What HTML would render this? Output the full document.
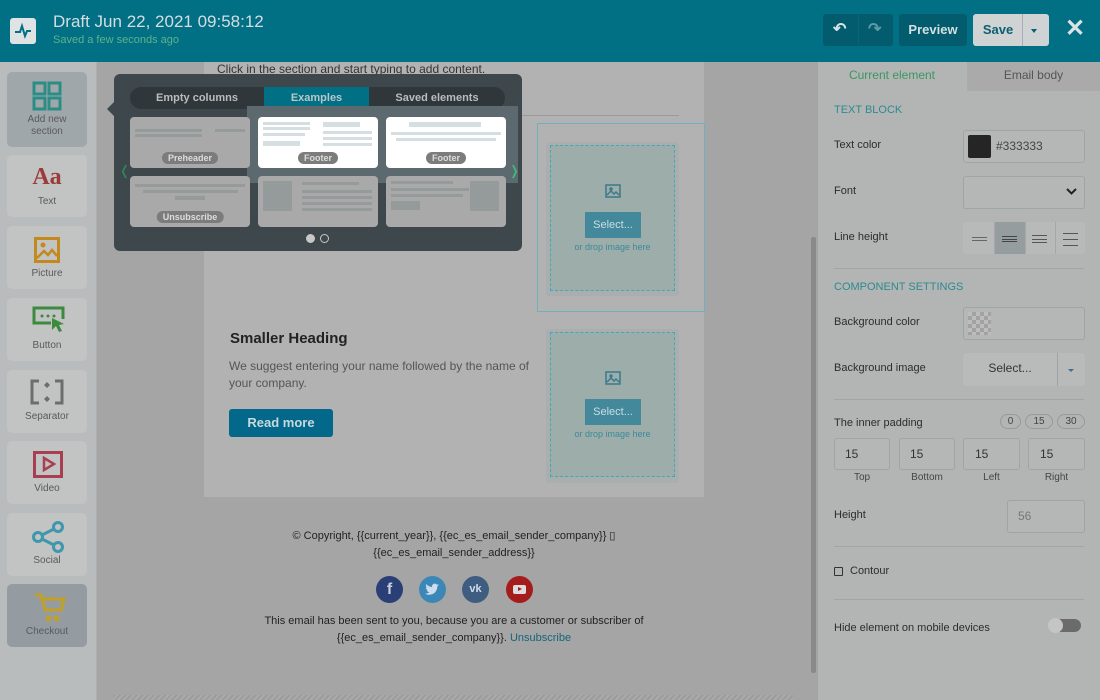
<!DOCTYPE html>
<html><head><meta charset="utf-8"><style>
*{box-sizing:border-box;margin:0;padding:0}
body{width:1100px;height:700px;overflow:hidden;position:relative;font-family:"Liberation Sans",sans-serif;background:#a5a5a5}
.abs{position:absolute}
#hdr{left:0;top:0;width:1100px;height:62px;background:#016f84}
.tile{position:absolute;left:7px;width:80px;background:#c2c3c3;border-radius:5px;text-align:center;font-size:10px;color:#5a5a5a}
.tile .lb{position:absolute;left:0;right:0;text-align:center;line-height:12px}
.rp{font-size:11px;color:#2c2c2c}
.inp{position:absolute;border:1px solid #9fa4a4;border-radius:3px;background:#b5b7b7}
.hr{position:absolute;left:834px;width:250px;height:1px;background:#9ea6a6}
.card{position:absolute;width:120px;height:51px;border-radius:4px;background:#a9a9a9}
.pill{position:absolute;bottom:4px;left:50%;transform:translateX(-50%);background:#7c7c7c;color:#ddd;font-size:9px;font-weight:bold;padding:1px 6px;border-radius:7px}
.ln{position:absolute;height:3px;background:#959a9b}
</style></head><body>
<div id="hdr" class="abs">
 <div class="abs" style="left:10px;top:18px;width:26px;height:26px;background:#dfe3e4;border-radius:3px">
  <svg width="26" height="26" viewBox="0 0 26 26"><path d="M5 14h5l2-6 3 10 2-5h4" fill="none" stroke="#016f84" stroke-width="2"/></svg></div>
 <div class="abs" style="left:53px;top:12px;color:#d6dde0;font-size:17px">Draft Jun 22, 2021 09:58:12</div>
 <div class="abs" style="left:53px;top:34px;color:#5fb38a;font-size:11px">Saved a few seconds ago</div>
 <div class="abs" style="left:823px;top:14px;width:70px;height:32px;background:#025c6e;border-radius:3px"></div>
 <div class="abs" style="left:858px;top:14px;width:1px;height:32px;background:#01687b"></div>
 <div class="abs" style="left:833px;top:19px;color:#d9e3e6;font-size:16px;font-weight:bold">↶</div>
 <div class="abs" style="left:868px;top:19px;color:#5d9aa7;font-size:16px;font-weight:bold">↷</div>
 <div class="abs" style="left:899px;top:14px;width:68px;height:32px;background:#025c6e;border-radius:3px;color:#d6dfe1;font-size:13px;font-weight:bold;text-align:center;line-height:32px">Preview</div>
 <div class="abs" style="left:973px;top:14px;width:76px;height:32px;background:#d0d3d4;border-radius:3px"></div>
 <div class="abs" style="left:973px;top:14px;width:50px;height:32px;color:#0b5f70;font-size:13px;font-weight:bold;text-align:center;line-height:32px">Save</div>
 <div class="abs" style="left:1022px;top:14px;width:1px;height:32px;background:#aab"></div>
 <div class="abs" style="left:1031px;top:29px;border:3px solid transparent;border-top:4px solid #0b5f70"></div>
 <div class="abs" style="left:1065px;top:14px;color:#dde3e5;font-size:24px;font-weight:bold">✕</div>
</div>

<div class="abs" style="left:0;top:62px;width:97px;height:638px;background:#b9bcbd;border-right:1px solid #adb0b1"></div>
<div class="tile" style="top:72px;height:75px;background:#a0a7ab">
 <svg class="abs" style="left:25px;top:9px" width="30" height="30" viewBox="0 0 30 30" fill="none" stroke="#2a8e84" stroke-width="3"><rect x="2" y="2" width="11" height="11"/><rect x="17" y="2" width="11" height="11"/><rect x="2" y="17" width="11" height="11"/><rect x="17" y="17" width="11" height="11"/></svg>
 <div class="lb" style="top:42px">Add new<br>section</div></div>
<div class="tile" style="top:155px;height:62px">
 <div class="abs" style="left:0;right:0;top:9px;font-family:'Liberation Serif',serif;font-weight:bold;font-size:24px;color:#9b3c3a">Aa</div>
 <div class="lb" style="top:41px">Text</div></div>
<div class="tile" style="top:226px;height:63px">
 <svg class="abs" style="left:27px;top:11px" width="26" height="26" viewBox="0 0 26 26"><rect x="1.5" y="1.5" width="23" height="23" fill="none" stroke="#c4891d" stroke-width="3"/><circle cx="9" cy="8" r="2.5" fill="#c4891d"/><path d="M3 21l7-7 4 4 4-5 5 6" fill="none" stroke="#c4891d" stroke-width="2.5"/></svg>
 <div class="lb" style="top:42px">Picture</div></div>
<div class="tile" style="top:298px;height:63px">
 <svg class="abs" style="left:24px;top:7px" width="36" height="32" viewBox="0 0 36 32"><path d="M20 18H3V3h29v11" fill="none" stroke="#3c8a3d" stroke-width="3"/><circle cx="11" cy="11" r="1.5" fill="#3c8a3d"/><circle cx="17" cy="11" r="1.5" fill="#3c8a3d"/><circle cx="23" cy="11" r="1.5" fill="#3c8a3d"/><path d="M21 13l12 6-5 1 3 6-3 1-3-6-4 4z" fill="#3c8a3d"/></svg>
 <div class="lb" style="top:42px">Button</div></div>
<div class="tile" style="top:370px;height:63px">
 <svg class="abs" style="left:23px;top:9px" width="34" height="26" viewBox="0 0 34 26" fill="none" stroke="#6d6d6d" stroke-width="3"><path d="M9 2H2v22h7M25 2h7v22h-7"/><path d="M17 3l3 3-3 3-3-3zM17 17l3 3-3 3-3-3z" fill="#6d6d6d" stroke="none"/></svg>
 <div class="lb" style="top:41px">Separator</div></div>
<div class="tile" style="top:441px;height:63px">
 <svg class="abs" style="left:26px;top:10px" width="30" height="28" viewBox="0 0 30 28"><rect x="1.5" y="1.5" width="27" height="24" fill="none" stroke="#a83e51" stroke-width="3"/><path d="M11 7l10 6-10 6z" fill="none" stroke="#a83e51" stroke-width="2.5"/></svg>
 <div class="lb" style="top:42px">Video</div></div>
<div class="tile" style="top:513px;height:63px">
 <svg class="abs" style="left:24px;top:8px" width="34" height="32" viewBox="0 0 34 32" fill="none" stroke="#3e97ad" stroke-width="3"><circle cx="7" cy="16" r="4.5"/><circle cx="27" cy="6" r="4.5"/><circle cx="27" cy="26" r="4.5"/><path d="M11 14l12-6M11 18l12 6"/></svg>
 <div class="lb" style="top:42px">Social</div></div>
<div class="tile" style="top:584px;height:63px;background:#959ca1">
 <svg class="abs" style="left:26px;top:8px" width="34" height="32" viewBox="0 0 34 32"><path d="M2 3h6l4 15h16l3-11H10" fill="none" stroke="#c2a021" stroke-width="3"/><rect x="13" y="24" width="5" height="5" fill="#c2a021"/><rect x="21" y="24" width="5" height="5" fill="#c2a021"/></svg>
 <div class="lb" style="top:42px">Checkout</div></div>

<div class="abs" style="left:204px;top:62px;width:500px;height:435px;background:#b2b2b2"></div>
<div class="abs" style="left:217px;top:62px;font-size:12px;color:#333">Click in the section and start typing to add content.</div>
<div class="abs" style="left:480px;top:115px;width:199px;height:1px;background:#9a9a9a"></div>
<div class="abs" style="left:537px;top:123px;width:168px;height:189px;border:1px solid #6eb0bd"></div>
<div class="abs" style="left:546px;top:142px;width:133px;height:154px;background:#aaaeae;border-radius:3px"></div>
<div class="abs" style="left:550px;top:145px;width:125px;height:146px;background:#9cadaa;border:1px dashed #3eaab9"></div>
<svg class="abs" style="left:605px;top:183px" width="16" height="16" viewBox="0 0 16 16" fill="none" stroke="#3a7a8a" stroke-width="1.5"><rect x="1" y="2" width="14" height="12"/><path d="M2 12l4-4 3 3 2-2 3 3"/><circle cx="6" cy="6" r="1"/></svg>
<div class="abs" style="left:585px;top:212px;width:56px;height:26px;background:#43889b;color:#c9dfe4;font-size:11px;text-align:center;line-height:26px;border-radius:1px">Select...</div>
<div class="abs" style="left:550px;top:242px;width:125px;text-align:center;font-size:9px;color:#3d8a9c">or drop image here</div>

<div class="abs" style="left:546px;top:329px;width:133px;height:154px;background:#aaaeae;border-radius:3px"></div>
<div class="abs" style="left:550px;top:332px;width:125px;height:145px;background:#9cadaa;border:1px dashed #3eaab9"></div>
<svg class="abs" style="left:605px;top:370px" width="16" height="16" viewBox="0 0 16 16" fill="none" stroke="#3a7a8a" stroke-width="1.5"><rect x="1" y="2" width="14" height="12"/><path d="M2 12l4-4 3 3 2-2 3 3"/><circle cx="6" cy="6" r="1"/></svg>
<div class="abs" style="left:585px;top:399px;width:56px;height:26px;background:#43889b;color:#c9dfe4;font-size:11px;text-align:center;line-height:26px">Select...</div>
<div class="abs" style="left:550px;top:429px;width:125px;text-align:center;font-size:9px;color:#3d8a9c">or drop image here</div>

<div class="abs" style="left:230px;top:330px;font-size:15px;font-weight:bold;color:#222">Smaller Heading</div>
<div class="abs" style="left:229px;top:358px;width:300px;font-size:12px;line-height:17px;color:#555">We suggest entering your name followed by the name of your company.</div>
<div class="abs" style="left:229px;top:409px;width:104px;height:28px;background:#03688a;border-radius:3px;color:#c8d9de;font-size:13px;font-weight:bold;text-align:center;line-height:28px">Read more</div>

<div class="abs" style="left:154px;top:528px;width:600px;text-align:center;font-size:11px;line-height:17px;color:#222">© Copyright, {{current_year}}, {{ec_es_email_sender_company}} ▯<br>{{ec_es_email_sender_address}}</div>
<div class="abs" style="left:376px;top:576px;width:27px;height:27px;border-radius:50%;background:#2a3f75;color:#ccd;font-weight:bold;font-size:16px;text-align:center;line-height:27px">f</div>
<div class="abs" style="left:419px;top:576px;width:27px;height:27px;border-radius:50%;background:#3b88b8"><svg class="abs" style="left:6px;top:7px" width="15" height="13" viewBox="0 0 15 13"><path d="M14 2c-.5.3-1 .4-1.6.5.6-.4 1-.9 1.2-1.5-.5.3-1.1.5-1.8.7C11.3 1 10.6.6 9.8.6 8.3.6 7 1.9 7 3.4c0 .2 0 .4.1.6C4.8 3.9 2.7 2.8 1.3 1.1 1 1.6.9 2 .9 2.5c0 1 .5 1.8 1.2 2.3-.5 0-.9-.1-1.3-.3 0 1.4 1 2.5 2.2 2.8-.4.1-.9.1-1.3 0 .4 1.1 1.4 1.9 2.6 2C3 10.3 1.5 10.8 0 10.6c1.2.8 2.7 1.2 4.3 1.2 5.2 0 8-4.3 8-8v-.4c.7-.4 1.2-.9 1.7-1.4z" fill="#cde"/></svg></div>
<div class="abs" style="left:462px;top:576px;width:27px;height:27px;border-radius:50%;background:#3e5d80;color:#cde;font-weight:bold;font-size:11px;text-align:center;line-height:27px">vk</div>
<div class="abs" style="left:506px;top:576px;width:27px;height:27px;border-radius:50%;background:#a51c1c"><div class="abs" style="left:7px;top:9px;width:13px;height:9px;background:#ddd;border-radius:2px"></div><div class="abs" style="left:12px;top:11px;border:2.5px solid transparent;border-left:4px solid #a51c1c"></div></div>
<div class="abs" style="left:154px;top:613px;width:600px;text-align:center;font-size:11px;line-height:17px;color:#222">This email has been sent to you, because you are a customer or subscriber of<br>{{ec_es_email_sender_company}}. <span style="color:#15657a">Unsubscribe</span></div>
<div class="abs" style="left:113px;top:695px;width:680px;height:5px;background:repeating-linear-gradient(135deg,#9c9c9c 0 2px,#aaa 2px 4px)"></div>
<div class="abs" style="left:811px;top:237px;width:5px;height:436px;background:#8a8a8a;border-radius:2px"></div>

<div class="abs rp" style="left:817px;top:62px;width:283px;height:638px;background:#b3b5b5;border-left:1px solid #a4a6a6"></div>
<div class="abs" style="left:967px;top:62px;width:133px;height:29px;background:#aaaaaa"></div>
<div class="abs" style="left:817px;top:68px;width:150px;text-align:center;font-size:12px;color:#3c9660">Current element</div>
<div class="abs" style="left:967px;top:68px;width:133px;text-align:center;font-size:12px;color:#555">Email body</div>
<div class="abs" style="left:834px;top:104px;font-size:11px;color:#2d8a90">TEXT BLOCK</div>
<div class="abs rp" style="left:834px;top:139px">Text color</div>
<div class="inp" style="left:963px;top:130px;width:122px;height:33px"></div>
<div class="abs" style="left:968px;top:135px;width:23px;height:23px;background:#252525;border-radius:2px"></div>
<div class="abs" style="left:996px;top:139px;font-size:12px;color:#444">#333333</div>
<div class="abs rp" style="left:834px;top:185px">Font</div>
<div class="inp" style="left:963px;top:176px;width:122px;height:33px"></div>
<svg class="abs" style="left:1066px;top:188px" width="11" height="8" viewBox="0 0 11 8"><path d="M1 1l4.5 4.5L10 1" fill="none" stroke="#222" stroke-width="2"/></svg>
<div class="abs rp" style="left:834px;top:231px">Line height</div>
<div class="abs" style="left:963px;top:222px;width:122px;height:32px;background:#b8baba;border-radius:3px"></div>
<div class="abs" style="left:994px;top:222px;width:31px;height:32px;background:#969d9e"></div>
<div class="abs" style="left:994px;top:222px;width:1px;height:32px;background:#a4a8a8"></div><div class="abs" style="left:1025px;top:222px;width:1px;height:32px;background:#a4a8a8"></div><div class="abs" style="left:1055px;top:222px;width:1px;height:32px;background:#a4a8a8"></div>
<div class="abs" style="left:972px;top:237px;width:15px;height:4px;border-top:1px solid #666;border-bottom:1px solid #666"></div>
<div class="abs" style="left:1002px;top:236px;width:15px;height:6px;border-top:1px solid #444;border-bottom:1px solid #444"><div style="height:1px;margin-top:2px;background:#444"></div></div>
<div class="abs" style="left:1032px;top:235px;width:15px;height:8px;border-top:1px solid #555;border-bottom:1px solid #555"><div style="height:1px;margin-top:3px;background:#555"></div></div>
<div class="abs" style="left:1063px;top:233px;width:15px;height:13px;border-top:1px solid #555;border-bottom:1px solid #555"><div style="height:1px;margin-top:5px;background:#555"></div></div>
<div class="hr" style="top:268px"></div>
<div class="abs" style="left:834px;top:281px;font-size:11px;color:#2d8a90">COMPONENT SETTINGS</div>
<div class="abs rp" style="left:834px;top:316px">Background color</div>
<div class="inp" style="left:963px;top:307px;width:122px;height:33px"></div>
<div class="abs" style="left:968px;top:312px;width:23px;height:23px;background:repeating-conic-gradient(#a2a2a2 0 25%,#bdbdbd 0 50%) 0 0/8px 8px"></div>
<div class="abs rp" style="left:834px;top:362px">Background image</div>
<div class="abs" style="left:963px;top:353px;width:122px;height:33px;background:#b9bbbb;border-radius:3px"></div>
<div class="abs" style="left:1057px;top:353px;width:1px;height:33px;background:#9fa3a3"></div>
<div class="abs" style="left:963px;top:361px;width:94px;text-align:center;font-size:12px;color:#333">Select...</div>
<div class="abs" style="left:1068px;top:369px;border:3px solid transparent;border-top:3px solid #3f6f8a"></div>
<div class="hr" style="top:399px"></div>
<div class="abs rp" style="left:834px;top:417px">The inner padding</div>
<div class="abs" style="left:1000px;top:414px;width:21px;height:15px;border:1px solid #999;border-radius:8px;font-size:10px;text-align:center;line-height:13px;color:#444">0</div>
<div class="abs" style="left:1025px;top:414px;width:28px;height:15px;border:1px solid #999;border-radius:8px;font-size:10px;text-align:center;line-height:13px;color:#444">15</div>
<div class="abs" style="left:1057px;top:414px;width:28px;height:15px;border:1px solid #999;border-radius:8px;font-size:10px;text-align:center;line-height:13px;color:#444">30</div>
<div class="inp" style="left:834px;top:438px;width:56px;height:32px"></div>
<div class="inp" style="left:899px;top:438px;width:56px;height:32px"></div>
<div class="inp" style="left:963px;top:438px;width:57px;height:32px"></div>
<div class="inp" style="left:1028px;top:438px;width:57px;height:32px"></div>
<div class="abs" style="left:845px;top:447px;font-size:12px;color:#333">15</div>
<div class="abs" style="left:910px;top:447px;font-size:12px;color:#333">15</div>
<div class="abs" style="left:975px;top:447px;font-size:12px;color:#333">15</div>
<div class="abs" style="left:1040px;top:447px;font-size:12px;color:#333">15</div>
<div class="abs" style="left:834px;top:472px;width:56px;text-align:center;font-size:10px;color:#444">Top</div>
<div class="abs" style="left:899px;top:472px;width:56px;text-align:center;font-size:10px;color:#444">Bottom</div>
<div class="abs" style="left:963px;top:472px;width:57px;text-align:center;font-size:10px;color:#444">Left</div>
<div class="abs" style="left:1028px;top:472px;width:57px;text-align:center;font-size:10px;color:#444">Right</div>
<div class="abs rp" style="left:834px;top:509px">Height</div>
<div class="inp" style="left:1007px;top:500px;width:78px;height:33px"></div>
<div class="abs" style="left:1018px;top:509px;font-size:12px;color:#777">56</div>
<div class="hr" style="top:546px"></div>
<div class="abs" style="left:834px;top:567px;width:9px;height:9px;border:1px solid #333;border-radius:1px"></div>
<div class="abs rp" style="left:850px;top:565px">Contour</div>
<div class="hr" style="top:599px"></div>
<div class="abs rp" style="left:834px;top:622px">Hide element on mobile devices</div>
<div class="abs" style="left:1050px;top:619px;width:31px;height:13px;background:#6b6b6b;border-radius:7px"></div>
<div class="abs" style="left:1048px;top:618px;width:15px;height:15px;background:#c5c5c5;border-radius:50%"></div>

<div class="abs" style="left:114px;top:74px;width:408px;height:177px;background:#3e474c;border-radius:6px"></div>
<div class="abs" style="left:107px;top:102px;border:7px solid transparent;border-right:7px solid #3e474c;border-left:0"></div>
<div class="abs" style="left:130px;top:87px;width:375px;height:22px;background:#2f373b;border-radius:11px"></div>
<div class="abs" style="left:264px;top:87px;width:105px;height:22px;background:#016f84;border-bottom:2px solid #0aa3c2"></div>
<div class="abs" style="left:130px;top:92px;width:134px;text-align:center;font-size:11px;font-weight:bold;color:#b9bdbf">Empty columns</div>
<div class="abs" style="left:264px;top:92px;width:105px;text-align:center;font-size:11px;font-weight:bold;color:#b9c7cb">Examples</div>
<div class="abs" style="left:369px;top:92px;width:136px;text-align:center;font-size:11px;font-weight:bold;color:#b9bdbf">Saved elements</div>
<div class="abs" style="left:247px;top:106px;width:271px;height:77px;background:#5c696f"></div>
<div class="card" style="left:130px;top:117px"><div class="ln" style="left:5px;top:12px;width:67px"></div><div class="ln" style="left:85px;top:12px;width:30px"></div><div class="ln" style="left:5px;top:17px;width:67px"></div><div class="pill">Preheader</div></div>
<div class="card" style="left:258px;top:117px;background:#fff"><div class="ln" style="left:5px;top:5px;width:47px;background:#d5dfe2"></div><div class="ln" style="left:5px;top:10px;width:47px;background:#d5dfe2"></div><div class="ln" style="left:5px;top:16px;width:42px;background:#d5dfe2"></div><div class="ln" style="left:5px;top:24px;width:37px;height:5px;background:#d5dfe2"></div><div class="ln" style="left:65px;top:5px;width:37px;height:5px;background:#d5dfe2"></div><div class="ln" style="left:65px;top:14px;width:49px;background:#d5dfe2"></div><div class="ln" style="left:65px;top:20px;width:49px;background:#d5dfe2"></div><div class="ln" style="left:65px;top:26px;width:49px;background:#d5dfe2"></div><div class="pill">Footer</div></div>
<div class="card" style="left:386px;top:117px;background:#fff"><div class="ln" style="left:23px;top:5px;width:72px;height:5px;background:#d5dfe2"></div><div class="ln" style="left:5px;top:15px;width:110px;background:#d5dfe2"></div><div class="ln" style="left:10px;top:21px;width:100px;background:#d5dfe2"></div><div class="pill">Footer</div></div>
<div class="card" style="left:130px;top:176px"><div class="ln" style="left:5px;top:8px;width:110px"></div><div class="ln" style="left:13px;top:14px;width:95px"></div><div class="ln" style="left:45px;top:20px;width:30px;height:4px"></div><div class="pill">Unsubscribe</div></div>
<div class="card" style="left:258px;top:176px"><div class="ln" style="left:5px;top:5px;width:29px;height:30px"></div><div class="ln" style="left:44px;top:6px;width:57px"></div><div class="ln" style="left:44px;top:14px;width:70px"></div><div class="ln" style="left:44px;top:20px;width:70px"></div><div class="ln" style="left:44px;top:26px;width:70px"></div><div class="ln" style="left:44px;top:32px;width:70px"></div></div>
<div class="card" style="left:386px;top:176px"><div class="ln" style="left:5px;top:5px;width:62px"></div><div class="ln" style="left:5px;top:12px;width:78px"></div><div class="ln" style="left:5px;top:18px;width:72px"></div><div class="ln" style="left:5px;top:25px;width:29px;height:9px"></div><div class="ln" style="left:84px;top:5px;width:29px;height:30px"></div></div>
<div class="abs" style="left:119px;top:163px;color:#2d8a5a;font-size:13px">❬</div>
<div class="abs" style="left:509px;top:163px;color:#3cc07a;font-size:13px">❭</div>
<div class="abs" style="left:306px;top:234px;width:9px;height:9px;border-radius:50%;background:#c8c8c8"></div>
<div class="abs" style="left:320px;top:234px;width:9px;height:9px;border-radius:50%;border:1px solid #c8c8c8"></div>
</body></html>
